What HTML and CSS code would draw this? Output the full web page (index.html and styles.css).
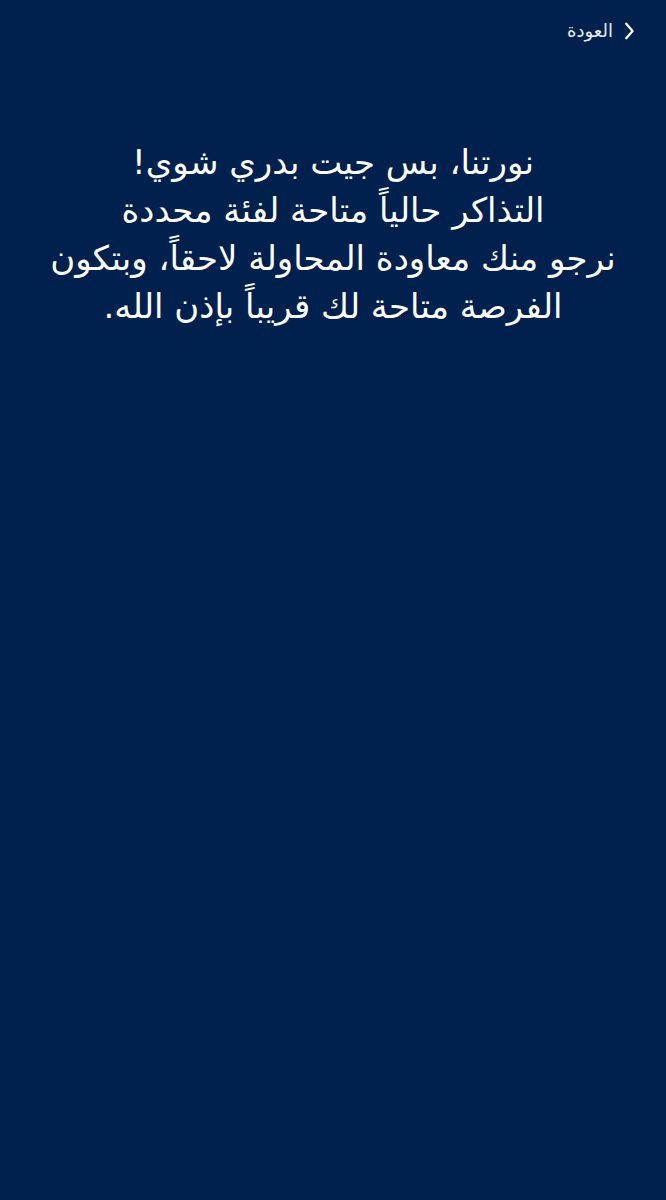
FILE: index.html
```html
<!DOCTYPE html>
<html lang="ar" dir="rtl">
<head>
<meta charset="utf-8">
<link rel="stylesheet" href="styles.css">
</head>
<body>
<div class="page">
  <header class="topbar">
    <a class="back" href="#">
      <svg class="chev" width="11" height="18" viewBox="0 0 11 18"><path d="M2.2 1.8 L8.6 9 L2.2 16.2" fill="none" stroke="#fff" stroke-width="2.3" stroke-linecap="round" stroke-linejoin="round"/></svg>
      <span>العودة</span>
    </a>
  </header>
  <main class="message">
    <p>نورتنا، بس جيت بدري شوي!<br>التذاكر حالياً متاحة لفئة محددة<br>نرجو منك معاودة المحاولة لاحقاً، وبتكون<br>الفرصة متاحة لك قريباً بإذن الله.</p>
  </main>
</div>
</body>
</html>
```

FILE: styles.css
```css
html, body {
  margin: 0;
  padding: 0;
  background: #00204e;
}
body {
  font-family: "DejaVu Sans", "Noto Sans", sans-serif;
  color: #ffffff;
}
.page {
  min-height: 1200px;
  background: #00204e;
}
.topbar {
  display: flex;
  padding: 18px 31px 0 0;
  height: 25px;
}
.back {
  display: flex;
  align-items: center;
  gap: 11px;
  color: #e8ecf4;
  text-decoration: none;
  font-size: 18px;
}
.chev {
  display: block;
}
.message {
  padding: 95px 10px 0;
  text-align: center;
}
.message p {
  margin: 0;
  font-size: 34px;
  line-height: 48px;
}
```
